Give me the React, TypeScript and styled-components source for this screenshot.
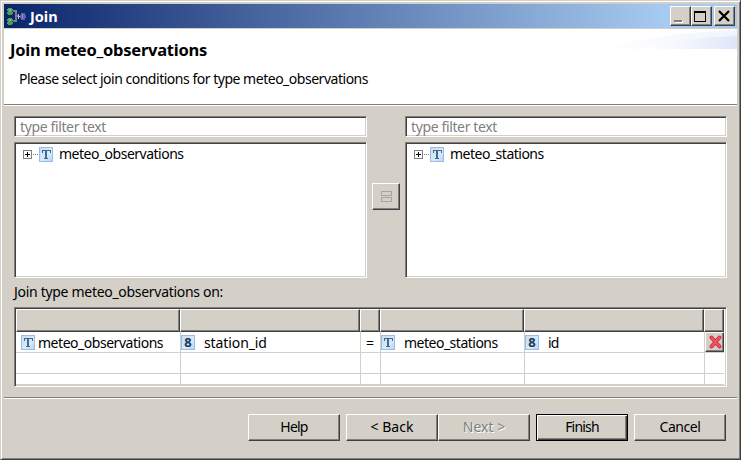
import React from 'react';
import styled, { createGlobalStyle, css } from 'styled-components';

const face = '#d4d0c8';
const Global = createGlobalStyle`
  * { box-sizing: border-box; }
  body { margin: 0; background: ${face}; }
`;
const raised = css`
  border: 1px solid;
  border-color: #fff #404040 #404040 #fff;
  box-shadow: inset -1px -1px #808080;
  background: ${face};
`;
const sunken = css`
  border: 1px solid;
  border-color: #808080 #fff #fff #808080;
  box-shadow: inset 1px 1px #404040, inset -1px -1px ${face};
  background: #fff;
`;
const Frame = styled.div`
  width: 741px;
  height: 460px;
  padding: 3px 3px 0;
  border: 1px solid;
  border-color: ${face} #404040 #404040 ${face};
  box-shadow: inset 1px 1px #fff, inset -1px -1px #808080;
  background: ${face};
  font: 14px/18px 'Noto Sans', sans-serif;
  color: #000;
  display: flex;
  flex-direction: column;
`;
const TitleBar = styled.header`
  height: 24px;
  flex: none;
  display: flex;
  align-items: center;
  padding: 0 2px;
  background: linear-gradient(90deg, #0a246a, #a6caf0 90%);
`;
const Title = styled.span`
  flex: 1;
  margin-left: 4px;
  color: #fff;
  font-size: 14.500px;
  font-weight: 700;
`;
const Caption = styled.button<{ $gap?: boolean }>`
  ${raised}
  width: 21px;
  height: 20px;
  padding: 0;
  margin-left: ${p => (p.$gap ? 2 : 0)}px;
  svg { display: block; }
`;
const Banner = styled.section`
  height: 77px;
  flex: none;
  margin-top: 1px;
  background: #fff;
  border-bottom: 1px solid #fff;
  box-shadow: inset 0 -1px #808080;
  display: flex;
  justify-content: space-between;
`;
const BannerText = styled.div`padding: 10px 0 0 6px;`;
const Heading = styled.h1`
  margin: 0;
  font-size: 16.500px;
  line-height: 22px;
  letter-spacing: -0.250px;
  white-space: nowrap;
`;
const Message = styled.p`margin: 9px 0 0 9px;`;
const Text = styled.span<{ $ls?: number }>`
  letter-spacing: ${p => p.$ls ?? 0}px;
  white-space: pre;
`;
const Body = styled.main`padding: 10px 10px 0; height: 291px; flex: none;`;
const Panes = styled.div`display: flex; align-items: center; height: 162px;`;
const Pane = styled.div<{ $w: number }>`width: ${p => p.$w}px; height: 162px;`;
const Filter = styled.div`
  ${sunken}
  height: 21px;
  padding: 0 5px;
  line-height: 19px;
  color: #808080;
`;
const Tree = styled.div`${sunken} height: 136px; margin-top: 5px; padding: 2px 8px;`;
const TreeItem = styled.div`
  display: flex;
  align-items: center;
  height: 18px;
  svg { flex: none; }
`;
const TreeLabel = styled(Text)`margin-left: 6px;`;
const MapButton = styled.button`
  ${raised}
  width: 28px;
  height: 27px;
  margin: -1px 5px 0;
  padding: 0;
  svg { display: block; }
`;
const Label = styled.div`height: 29px; padding-top: 5px;`;
const Table = styled.div`${sunken} width: 713px; height: 80px; padding: 1px;`;
const Row = styled.div<{ $h: number }>`
  display: grid;
  grid-template-columns: 164px 180px 20px 144px 180px 20px;
  width: 708px;
  height: ${p => p.$h}px;
`;
const HeadCell = styled.div`${raised} height: 23px;`;
const Cell = styled.div<{ $first?: boolean; $pad?: number; $gap?: number }>`
  display: flex;
  align-items: center;
  gap: ${p => p.$gap ?? 0}px;
  padding-left: ${p => p.$pad ?? 0}px;
  border-left: ${p => (p.$first ? 0 : 1)}px solid ${face};
  border-bottom: 1px solid ${face};
  svg { flex: none; }
  ${Text} { padding-top: 1px; }
`;
const Delete = styled.button`${raised} width: 19px; height: 20px; padding: 0; svg { display: block; }`;
const Footer = styled.footer`
  height: 61px;
  border-top: 1px solid #808080;
  box-shadow: inset 0 1px #fff;
  padding: 16px 11px 0 0;
  display: flex;
  justify-content: flex-end;
  gap: 6px;
`;
const Pair = styled.div`display: flex;`;
const Button = styled.button<{ $default?: boolean }>`
  ${raised}
  width: 92px;
  height: 27px;
  padding: 0 0 1px;
  font: inherit;
  color: #000;
  ${p => p.$default && css`
    border-color: #000;
    box-shadow: inset 1px 1px #fff, inset -1px -1px #404040, inset -2px -2px #808080;
  `}
  &:disabled { color: #808080; text-shadow: 1px 1px #fff; }
`;
const BadgeIcon = styled.svg`overflow: visible;`;
const Digit = styled.text`
  font: 700 13px 'Noto Sans', sans-serif;
  fill: #23384f;
  text-anchor: middle;
`;

const Badge = ({ kind }: { kind: 'T' | '8' }) => (
  <BadgeIcon width="14" height="15" shapeRendering="crispEdges">
    <defs>
      <linearGradient id="badge" x2="1" y2="1">
        <stop stopColor="#c6dcf5" /><stop offset=".6" stopColor="#d3edff" /><stop offset="1" stopColor="#b5cdf2" />
      </linearGradient>
    </defs>
    <rect x=".5" y=".5" width="13" height="14" fill="url(#badge)" stroke="#9dbbe8" />
    {kind === 'T' ? (
      <path d="M3 3h9v3h-1V4H8v7h1v1H5v-1h1V4H4v2H3z" fill="#4a6886" />
    ) : (
      <Digit x="7" y="12.200">8</Digit>
    )}
  </BadgeIcon>
);
const Expander = () => (
  <svg width="16" height="15" shapeRendering="crispEdges">
    <rect x=".5" y="3.500" width="8" height="8" fill="#fff" stroke="#808080" />
    <path d="M2 7h5v1H2zM4 5h1v5H4z" fill="#000" />
    <path d="M10 7h1v1h-1zM12 7h1v1h-1zM14 7h1v1h-1z" fill="#808080" />
  </svg>
);
const JoinIcon = () => (
  <svg width="20" height="20" shapeRendering="crispEdges">
    <path d="M7 5h3v10H7M10 10h3" fill="none" stroke="#77808c" strokeWidth="2" />
    <path d="M2 2h4v1h1v2H6v1h1v2H6v1H2V8H1V6h1V5H1V3h1zM2 12h4v1h1v2H6v1h1v2H6v1H2v-1H1v-2h1v-1H1v-2h1z" fill="#4f9a58" />
    <path d="M3 3h2v2H3zM3 13h2v2H3z" fill="#74c07a" />
    <path d="M12 8h1v5h-1zM13 10h3v1h-3z" fill="#c3c6cc" />
    <path d="M15 7h4v2h1v3h-1v2h-4v-2h-1V9h1z" fill="#6163ad" />
    <path d="M16 8h1v5h-1z" fill="#8b8dd0" />
  </svg>
);
const Swoosh = () => (
  <svg width="140" height="20">
    <defs>
      <linearGradient id="sweep"><stop stopColor="#fff" /><stop offset=".4" stopColor="#f5f8fe" /><stop offset="1" stopColor="#dfe6f9" /></linearGradient>
      <linearGradient id="glow"><stop stopColor="#fff" /><stop offset="1" stopColor="#f0f4fd" /></linearGradient>
    </defs>
    <path d="M0 20Q65 4 140 1v20H0z" fill="url(#glow)" />
    <path d="M40 20Q85 9 140 7v15H40z" fill="url(#sweep)" />
  </svg>
);

const TreePane = ({ name, width }: { name: string; width: number }) => (
  <Pane $w={width}>
    <Filter><Text $ls={-0.37}>type filter text</Text></Filter>
    <Tree><TreeItem><Expander /><Badge kind="T" /><TreeLabel $ls={-0.5}>{name}</TreeLabel></TreeItem></Tree>
  </Pane>
);
const EmptyRow = ({ h }: { h: number }) => (
  <Row $h={h}><Cell $first /><Cell /><Cell /><Cell /><Cell /><Cell /></Row>
);

export default function App() {
  return (
    <>
      <Global />
      <Frame>
        <TitleBar>
          <JoinIcon />
          <Title><Text>Join</Text></Title>
          <Caption aria-label="Minimize">
            <svg width="19" height="18" shapeRendering="crispEdges"><path d="M4 14h8v2H4z" fill="#fff" /><path d="M3 13h8v2H3z" fill="#808080" /></svg>
          </Caption>
          <Caption aria-label="Maximize">
            <svg width="19" height="18" shapeRendering="crispEdges"><path d="M2 4h12v11H2zM3 6v8h10V6z" fillRule="evenodd" /></svg>
          </Caption>
          <Caption $gap aria-label="Close">
            <svg width="19" height="18"><path d="M4 4l10 10M14 4L4 14" stroke="#000" strokeWidth="2.200" /></svg>
          </Caption>
        </TitleBar>
        <Banner>
          <BannerText>
            <Heading>Join meteo_observations</Heading>
            <Message><Text $ls={-0.48}>Please select join conditions for type meteo_observations</Text></Message>
          </BannerText>
          <Swoosh />
        </Banner>
        <Body>
          <Panes>
            <TreePane name="meteo_observations" width={353} />
            <MapButton disabled aria-label="Add condition">
              <svg width="26" height="25" shapeRendering="crispEdges"><path d="M8.500 7.500h10v4h-10zM8.500 13.500h10v4h-10z" fill="none" stroke="#a5a5a5" /></svg>
            </MapButton>
            <TreePane name="meteo_stations" width={322} />
          </Panes>
          <Label><Text $ls={-0.3}>Join type meteo_observations on:</Text></Label>
          <Table>
            <Row $h={23}>{[0, 1, 2, 3, 4, 5].map(i => <HeadCell key={i} />)}</Row>
            <Row $h={21}>
              <Cell $first $pad={5} $gap={3}><Badge kind="T" /><Text $ls={-0.47}>meteo_observations</Text></Cell>
              <Cell $gap={9}><Badge kind="8" /><Text $ls={-0.1}>station_id</Text></Cell>
              <Cell $pad={5}><Text>=</Text></Cell>
              <Cell $gap={9}><Badge kind="T" /><Text $ls={-0.5}>meteo_stations</Text></Cell>
              <Cell $gap={9}><Badge kind="8" /><Text $ls={-0.8}>id</Text></Cell>
              <Cell>
                <Delete aria-label="Remove">
                  <svg width="17" height="18"><path d="M5.500 4.500l8 9M13.500 4.500l-8 9" stroke="#cf2f3c" strokeWidth="4" strokeLinecap="round" /><path d="M5.500 4.500l8 9M13.500 4.500l-8 9" stroke="#ee5560" strokeWidth="2" strokeLinecap="round" /></svg>
                </Delete>
              </Cell>
            </Row>
            <EmptyRow h={21} />
            <EmptyRow h={11} />
          </Table>
        </Body>
        <Footer>
          <Button><Text $ls={-0.8}>Help</Text></Button>
          <Pair><Button><Text>&lt; Back</Text></Button><Button disabled><Text>Next &gt;</Text></Button></Pair>
          <Button $default><Text $ls={-0.8}>Finish</Text></Button>
          <Button><Text $ls={-0.45}>Cancel</Text></Button>
        </Footer>
      </Frame>
    </>
  );
}
